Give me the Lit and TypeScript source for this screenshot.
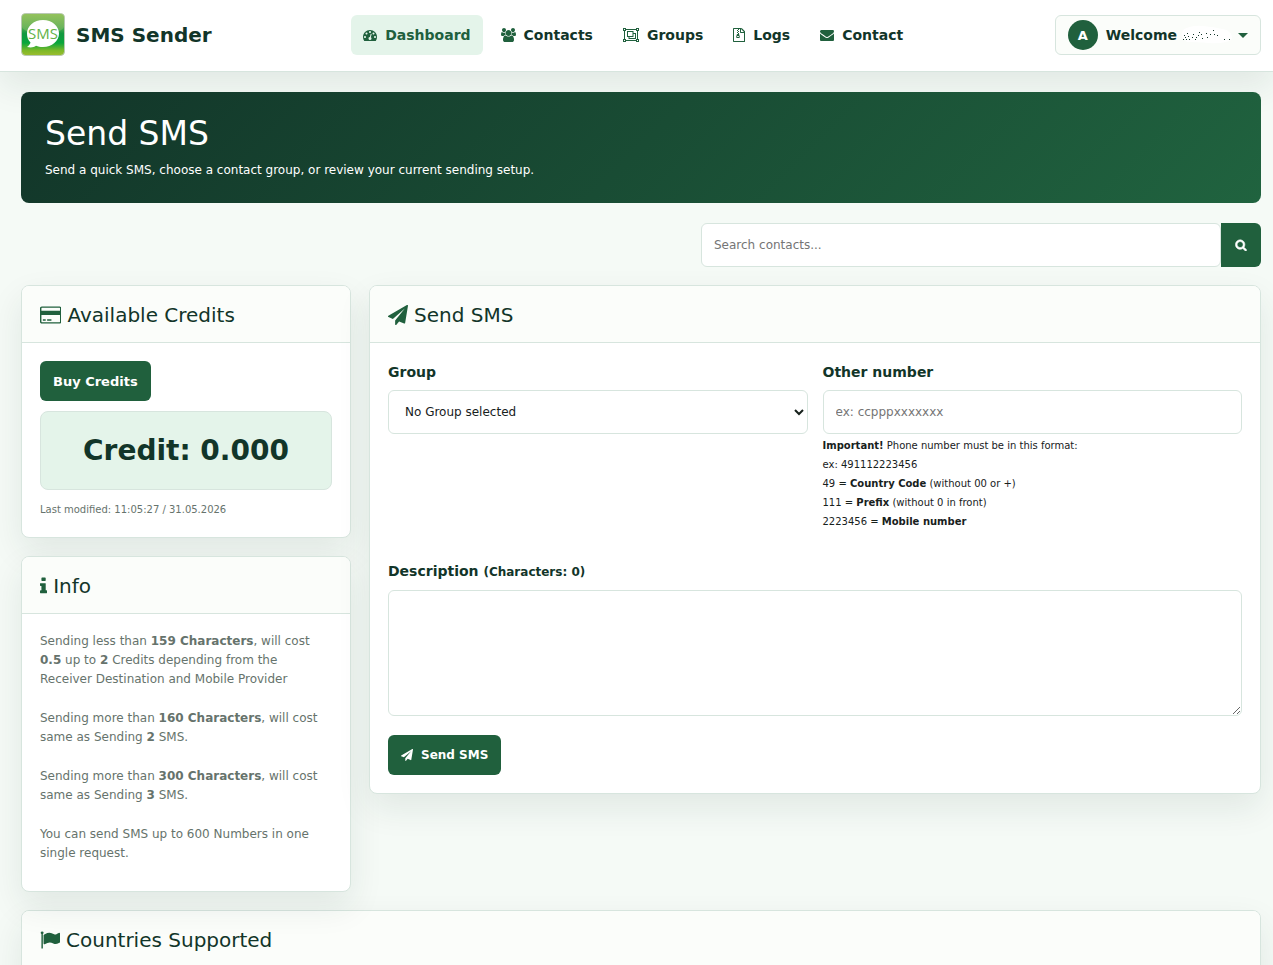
import { LitElement, html, svg, css } from "lit";
import { customElement, property, state } from "lit/decorators.js";

const ICONS: Record<string, { w: number; d: string }> = {
  dashboard: { w: 1792, d: "M384 1152q0-53-37.5-90.5t-90.5-37.5-90.5 37.5-37.5 90.5 37.5 90.5 90.5 37.5 90.5-37.5 37.5-90.5zm192-448q0-53-37.5-90.5t-90.5-37.5-90.5 37.5-37.5 90.5 37.5 90.5 90.5 37.5 90.5-37.5 37.5-90.5zm428 481l101-382q6-26-7.5-48.5t-38.5-29.5-48 6.5-30 39.5l-101 382q-60 5-107 43.5t-63 98.5q-20 77 20 146t117 89 146-20 89-117q16-60-6-117t-72-91zm660-33q0-53-37.5-90.5t-90.5-37.5-90.5 37.5-37.5 90.5 37.5 90.5 90.5 37.5 90.5-37.5 37.5-90.5zm-640-640q0-53-37.5-90.5t-90.5-37.5-90.5 37.5-37.5 90.5 37.5 90.5 90.5 37.5 90.5-37.5 37.5-90.5zm448 192q0-53-37.5-90.5t-90.5-37.5-90.5 37.5-37.5 90.5 37.5 90.5 90.5 37.5 90.5-37.5 37.5-90.5zm320 448q0 261-141 483-19 29-54 29h-1402q-35 0-54-29-141-221-141-483 0-182 71-348t191-286 286-191 348-71 348 71 286 191 191 286 71 348z" },
  users: { w: 1920, d: "M593 896q-162 5-265 128h-134q-82 0-138-40.5t-56-118.5q0-353 124-353 6 0 43.5 21t97.5 42.5 119 21.5q67 0 133-23-5 37-5 66 0 139 81 256zm1071 637q0 120-73 189.5t-194 69.5h-874q-121 0-194-69.5t-73-189.5q0-53 3.5-103.5t14-109 26.5-108.5 43-97.5 62-81 85.5-53.5 111.5-20q10 0 43 21.5t73 48 107 48 135 21.5 135-21.5 107-48 73-48 43-21.5q61 0 111.5 20t85.5 53.5 62 81 43 97.5 26.5 108.5 14 109 3.5 103.5zm-1024-1277q0 106-75 181t-181 75-181-75-75-181 75-181 181-75 181 75 75 181zm704 384q0 159-112.5 271.5t-271.5 112.5-271.5-112.5-112.5-271.5 112.5-271.5 271.5-112.5 271.5 112.5 112.5 271.5zm576 225q0 78-56 118.5t-138 40.5h-134q-103-123-265-128 81-117 81-256 0-29-5-66 66 23 133 23 59 0 119-21.5t97.5-42.5 43.5-21q124 0 124 353zm-128-609q0 106-75 181t-181 75-181-75-75-181 75-181 181-75 181 75 75 181z" },
  group: { w: 2048, d: "M0 0h384v128h1280V0h384v384h-128v1024h128v384h-384v-128H384v128H0v-384h128V384H0zM128 128v128h128V128zM1792 128v128h128V128zM128 1536v128h128v-128zM1792 1536v128h128v-128zM384 256v128H256v1024h128v128h1280v-128h128V384h-128V256zM512 384h832v256h320v768H704v-256H512zM640 512v512h576V512zM1344 768v384H832v128h704V768z" },
  archive: { w: 1536, d: "M96 0h928q40 0 88 20t76 48l312 312q28 28 48 76t20 88v1152q0 40-28 68t-68 28H96q-40 0-68-28t-28-68V96q0-40 28-68t68-28zM128 128v1536h1280V640H992q-40 0-68-28t-28-68V128H768v128H640V128zM1024 136v376h376zM512 256h128v128H512zM640 384h128v128H640zM512 512h128v128H512zM640 640h128v128H640zM512 768h256l107 349q21 66-40 119t-195 52-195-52-40-119zM640 1024a128 64 0 1 0 1 0z" },
  envelope: { w: 1792, d: "M1792 710v794q0 66-47 113t-113 47h-1472q-66 0-113-47t-47-113v-794q44 49 101 87 362 246 497 345 57 42 92.5 65.5t94.5 48 110 24.5h2q51 0 110-24.5t94.5-48 92.5-65.5q170-123 498-345 57-39 100-87zm0-294q0 79-49 151t-122 123q-376 261-468 325-10 7-42.5 31t-54 38.5-52 32.5-57.5 27-50 9h-2q-23 0-50-9t-57.5-27-52-32.5-54-38.5-42.5-31q-91-64-262-182.5t-205-142.5q-62-42-117-115.5t-55-136.5q0-78 41.5-130t118.5-52h1472q65 0 112.5 47t47.5 113z" },
  card: { w: 1920, d: "M1760 128q66 0 113 47t47 113v1216q0 66-47 113t-113 47h-1600q-66 0-113-47t-47-113v-1216q0-66 47-113t113-47h1600zm-1600 128q-13 0-22.5 9.5t-9.5 22.5v224h1664v-224q0-13-9.5-22.5t-22.5-9.5h-1600zm1600 1280q13 0 22.5-9.5t9.5-22.5v-608h-1664v608q0 13 9.5 22.5t22.5 9.5h1600zm-1504-128v-128h256v128h-256zm384 0v-128h384v128h-384z" },
  plane: { w: 1792, d: "M1764 11q33 24 27 64l-256 1536q-5 29-32 45-14 8-31 8-11 0-24-5l-453-185-242 295q-18 23-49 23-13 0-22-4-19-7-30.5-23.5t-11.5-36.5v-349l864-1059-1069 925-395-162q-37-14-40-55-2-40 32-59l1664-960q15-9 32-9 20 0 36 11z" },
  info: { w: 640, d: "M640 1344v128q0 26-19 45t-45 19h-512q-26 0-45-19t-19-45v-128q0-26 19-45t45-19h64v-384h-64q-26 0-45-19t-19-45v-128q0-26 19-45t45-19h384q26 0 45 19t19 45v576h64q26 0 45 19t19 45zm-128-1152v192q0 26-19 45t-45 19h-256q-26 0-45-19t-19-45v-192q0-26 19-45t45-19h256q26 0 45 19t19 45z" },
  flag: { w: 1792, d: "M320 256q0 72-64 110v1266q0 13-9.5 22.5t-22.5 9.5h-64q-13 0-22.5-9.5t-9.5-22.5v-1266q-64-38-64-110 0-53 37.5-90.5t90.5-37.5 90.5 37.5 37.5 90.5zm1472 64v763q0 25-12.5 38.5t-39.5 27.5q-215 116-369 116-61 0-123.5-22t-108.5-48-115.5-48-142.5-22q-192 0-464 146-17 9-33 9-26 0-45-19t-19-45v-742q0-32 31-55 21-14 79-43 236-120 421-120 107 0 200 29t219 88q38 19 88 19 54 0 117.5-21t110-47 88-47 54.5-21q26 0 45 19t19 45z" },
  search: { w: 1792, d: "M1216 832q0-185-131.5-316.5t-316.5-131.5-316.5 131.5-131.5 316.5 131.5 316.5 316.5 131.5 316.5-131.5 131.5-316.5zm512 832q0 52-38 90t-90 38q-54 0-90-38l-343-342q-179 124-399 124-143 0-273.5-55.5t-225-150-150-225-55.5-273.5 55.5-273.5 150-225 225-150 273.5-55.5 273.5 55.5 225 150 150 225 55.5 273.5q0 220-124 399l343 343q37 37 37 90z" },
};

@customElement("app-icon")
class AppIcon extends LitElement {
  @property() name = "";
  static styles = css`
    :host { display: inline-flex; flex: none; }
    svg { height: 1em; width: auto; display: block; fill: currentColor; fill-rule: evenodd; }
  `;
  render() {
    const icon = ICONS[this.name];
    return html`<svg viewBox="0 0 ${icon.w} 1792" aria-hidden="true">${svg`<path d=${icon.d} />`}</svg>`;
  }
}

@customElement("app-card")
class AppCard extends LitElement {
  @property() icon = "";
  @property() heading = "";
  static styles = css`
    :host {
      display: block;
      border: 1px solid #d7e5de;
      border-radius: 8px;
      background: #fff;
      box-shadow: 0 14px 34px rgba(18, 53, 41, 0.09);
    }
    .head {
      display: flex;
      align-items: center;
      gap: 6px;
      padding: 15px 18px 13px;
      border-bottom: 1px solid #d7e5de;
      border-radius: 7px 7px 0 0;
      background: #fbfdfa;
      font-size: 20px;
      line-height: 28px;
    }
    .head app-icon { color: #20603d; }
    h2 { margin: 0; font: inherit; color: #123529; }
    .body { padding: 18px; }
  `;
  render() {
    return html`
      <div class="head"><app-icon name=${this.icon}></app-icon><h2>${this.heading}</h2></div>
      <div class="body"><slot></slot></div>
    `;
  }
}

const NAV = [
  { icon: "dashboard", label: "Dashboard" },
  { icon: "users", label: "Contacts" },
  { icon: "group", label: "Groups" },
  { icon: "archive", label: "Logs" },
  { icon: "envelope", label: "Contact" },
];

@customElement("app-root")
class AppRoot extends LitElement {
  @state() private message = "";

  static styles = css`
    :host {
      display: block;
      min-height: 100vh;
      background: #f5faf6;
      color: #17211c;
      font-family: Verdana, "DejaVu Sans", sans-serif;
      font-size: 13px;
      line-height: 19px;
    }
    * { box-sizing: border-box; }
    a { color: inherit; text-decoration: none; }
    button, input, select, textarea { font: inherit; margin: 0; }
    header {
      display: flex;
      align-items: center;
      justify-content: space-between;
      padding: 13px 12px 14px 21px;
      border-bottom: 1px solid #d7e5de;
      background: #fff;
      box-shadow: 0 14px 34px rgba(18, 53, 41, 0.09);
    }
    .brand { display: flex; align-items: center; gap: 11px; font-size: 20px; line-height: 28px; font-weight: 700; color: #123529; }
    .logo { display: block; width: 44px; height: 44px; }
    nav { display: flex; gap: 6px; }
    .link {
      display: flex;
      align-items: center;
      gap: 8px;
      height: 40px;
      padding: 0 12px;
      border-radius: 6px;
      font-size: 14px;
      font-weight: 700;
      color: #123529;
    }
    .link app-icon { color: #20603d; }
    .link.active { background: #e4f4ea; color: #20603d; }
    .user {
      display: flex;
      align-items: center;
      height: 40px;
      padding: 0 12px;
      border: 1px solid #d7e5de;
      border-radius: 6px;
      background: #fbfdfa;
      font-size: 14px;
      font-weight: 700;
      color: #123529;
    }
    .avatar {
      display: grid;
      place-items: center;
      width: 30px;
      height: 30px;
      margin-right: 8px;
      border-radius: 50%;
      background: #20603d;
      color: #fff;
      font-size: 13px;
    }
    .smudge { width: 56px; height: 20px; margin: 0 3px 0 2px; }
    .caret { width: 10px; height: 5px; fill: #20603d; }
    main { padding: 20px 12px 24px 21px; }
    .hero {
      padding: 20px 24px 23px;
      border-radius: 8px;
      background: linear-gradient(135deg, #123529, #20633f);
      color: #fff;
    }
    .hero h1 { margin: 0; font-size: 33px; line-height: 44px; font-weight: 400; }
    .hero p { margin: 5px 0 0; font-size: 12px; }
    .search { display: flex; max-width: 560px; margin: 20px 0 18px auto; }
    .field {
      display: block;
      width: 100%;
      height: 44px;
      padding: 0 12px;
      border: 1px solid #d7e5de;
      border-radius: 6px;
      background: #fff;
      color: #17211c;
      font-size: 12px;
    }
    .field::placeholder { color: #757575; }
    .search button {
      display: grid;
      place-items: center;
      flex: none;
      width: 40px;
      border: 0;
      border-radius: 0 6px 6px 0;
      background: #20603d;
      color: #fff;
      font-size: 12px;
    }
    .search button app-icon { stroke: #fff; stroke-width: 90px; }
    .layout { display: grid; grid-template-columns: 330px minmax(0, 1fr); gap: 18px; align-items: start; }
    .side { display: grid; gap: 18px; }
    .btn {
      display: inline-flex;
      align-items: center;
      gap: 8px;
      height: 40px;
      padding: 0 13px;
      border: 0;
      border-radius: 6px;
      background: #20603d;
      color: #fff;
      font-size: 13px;
      font-weight: 700;
    }
    .btn.send { font-size: 12px; }
    .credit {
      margin: 10px 0 11px;
      padding: 19px;
      border: 1px solid #d7e5de;
      border-radius: 8px;
      background: #e4f4ea;
      color: #123529;
      font-size: 28px;
      line-height: 39px;
      font-weight: 700;
      text-align: center;
    }
    .modified { margin: 0; font-size: 10px; line-height: 18px; color: #66736c; }
    .info p { margin: 0 0 20px; font-size: 12px; color: #66736c; }
    .info p:last-child { margin-bottom: 10px; }
    .row { display: grid; grid-template-columns: 1fr 1fr; gap: 15px; }
    .label { display: block; padding-top: 1px; margin-bottom: 8px; font-size: 14px; line-height: 20px; font-weight: 700; color: #123529; }
    .count { font-size: 12px; }
    .field.select { padding: 0 0 0 12px; }
    .hint { margin: 2px 0 29px; font-size: 10px; }
    textarea.field { height: 126px; padding: 12px; margin-bottom: 19px; resize: vertical; }
    .countries { margin-top: 18px; }
  `;

  private logo() {
    return html`<svg class="logo" viewBox="0 0 44 44" role="img" aria-label="SMS Sender logo">
      <defs>
        <linearGradient id="g" x2="0" y2="1">
          <stop offset="0" stop-color="#92c15b" /><stop offset=".3" stop-color="#5fb056" />
          <stop offset=".48" stop-color="#12983f" /><stop offset=".7" stop-color="#09a53c" />
          <stop offset=".88" stop-color="#7cb928" /><stop offset="1" stop-color="#9dbd2e" />
        </linearGradient>
        <linearGradient id="s" x2="0" y2="1">
          <stop offset="0" stop-color="#94c25c" /><stop offset="1" stop-color="#5fb060" />
        </linearGradient>
      </defs>
      <rect x=".5" y=".5" width="43" height="42" rx="4" fill="url(#g)" stroke="#b9c9b4" />
      <path d="M1 5q0-4 4-4h34q4 0 4 4v9q-4 7-21 7T1 14z" fill="url(#s)" opacity=".8" />
      <path d="M22 7c9 0 16 6 16 13.500S31 34 22 34c-3 0-5-.4-7-1.200-2 1.500-5 2-9 1.200 2-1.500 3-3 3.500-4.500C7 27 6 24 6 20.500 6 13 13 7 22 7z" fill="#fff" />
      <text x="22" y="26" text-anchor="middle" font-family="Open Sans, sans-serif" font-size="15" font-weight="400" fill="#62b246">SMS</text>
    </svg>`;
  }

  private smudge() {
    return html`<svg class="smudge" viewBox="0 0 56 20" aria-hidden="true">
      <path d="M4 5Q12 0 24 1t24 4q7 5 4 10-8 4-22 3T8 17Q0 12 4 5z" fill="#fff" />
      <path
        d="M4 14h1M6 12h1M5 10h1M8 8h1M9 11h1M10 14h1M13 12h1M14 9h1M17 12h1M19 10h1M22 9h1M23 13h1M27 8h1M28 12h1M31 9h1M34 5h1M35 9h1M38 10h1M45 14h1M50 14h1M7 14h1M16 14h1M20 7h1"
        stroke="#123529" shape-rendering="crispEdges" />
    </svg>`;
  }

  render() {
    return html`
      <header>
        <a class="brand" href="#">${this.logo()}SMS Sender</a>
        <nav>
          ${NAV.map(
            (n, i) => html`<a class="link ${i === 0 ? "active" : ""}" href="#"><app-icon name=${n.icon}></app-icon>${n.label}</a>`
          )}
        </nav>
        <button class="user" aria-haspopup="menu">
          <span class="avatar">A</span>Welcome ${this.smudge()}
          <svg class="caret" viewBox="0 0 10 5" aria-hidden="true"><path d="M0 0h10L5 5z" /></svg>
        </button>
      </header>
      <main>
        <section class="hero">
          <h1>Send SMS</h1>
          <p>Send a quick SMS, choose a contact group, or review your current sending setup.</p>
        </section>
        <form class="search" role="search" @submit=${(e: Event) => e.preventDefault()}>
          <input class="field" type="search" aria-label="Search contacts" placeholder="Search contacts..." />
          <button aria-label="Search"><app-icon name="search"></app-icon></button>
        </form>
        <div class="layout">
          <div class="side">
            <app-card icon="card" heading="Available Credits">
              <button class="btn">Buy Credits</button>
              <div class="credit">Credit: 0.000</div>
              <p class="modified">Last modified: 11:05:27 / 31.05.2026</p>
            </app-card>
            <app-card class="info" icon="info" heading="Info">
              <p>Sending less than <b>159 Characters</b>, will cost <b>0.5</b> up to <b>2</b> Credits depending from the Receiver Destination and Mobile Provider</p>
              <p>Sending more than <b>160 Characters</b>, will cost same as Sending <b>2</b> SMS.</p>
              <p>Sending more than <b>300 Characters</b>, will cost same as Sending <b>3</b> SMS.</p>
              <p>You can send SMS up to 600 Numbers in one single request.</p>
            </app-card>
          </div>
          <app-card icon="plane" heading="Send SMS">
            <form @submit=${(e: Event) => e.preventDefault()}>
              <div class="row">
                <div>
                  <label class="label" for="group">Group</label>
                  <select class="field select" id="group"><option>No Group selected</option></select>
                </div>
                <div>
                  <label class="label" for="number">Other number</label>
                  <input class="field" id="number" type="tel" placeholder="ex: ccpppxxxxxxx" />
                  <p class="hint">
                    <b>Important!</b> Phone number must be in this format:<br />
                    ex: 491112223456<br />
                    49 = <b>Country Code</b> (without 00 or +)<br />
                    111 = <b>Prefix</b> (without 0 in front)<br />
                    2223456 = <b>Mobile number</b>
                  </p>
                </div>
              </div>
              <label class="label" for="message">Description <span class="count">(Characters: ${this.message.length})</span></label>
              <textarea class="field" id="message" @input=${(e: Event) => (this.message = (e.target as HTMLTextAreaElement).value)}></textarea>
              <button class="btn send"><app-icon name="plane"></app-icon>Send SMS</button>
            </form>
          </app-card>
        </div>
        <app-card class="countries" icon="flag" heading="Countries Supported"></app-card>
      </main>
    `;
  }
}
